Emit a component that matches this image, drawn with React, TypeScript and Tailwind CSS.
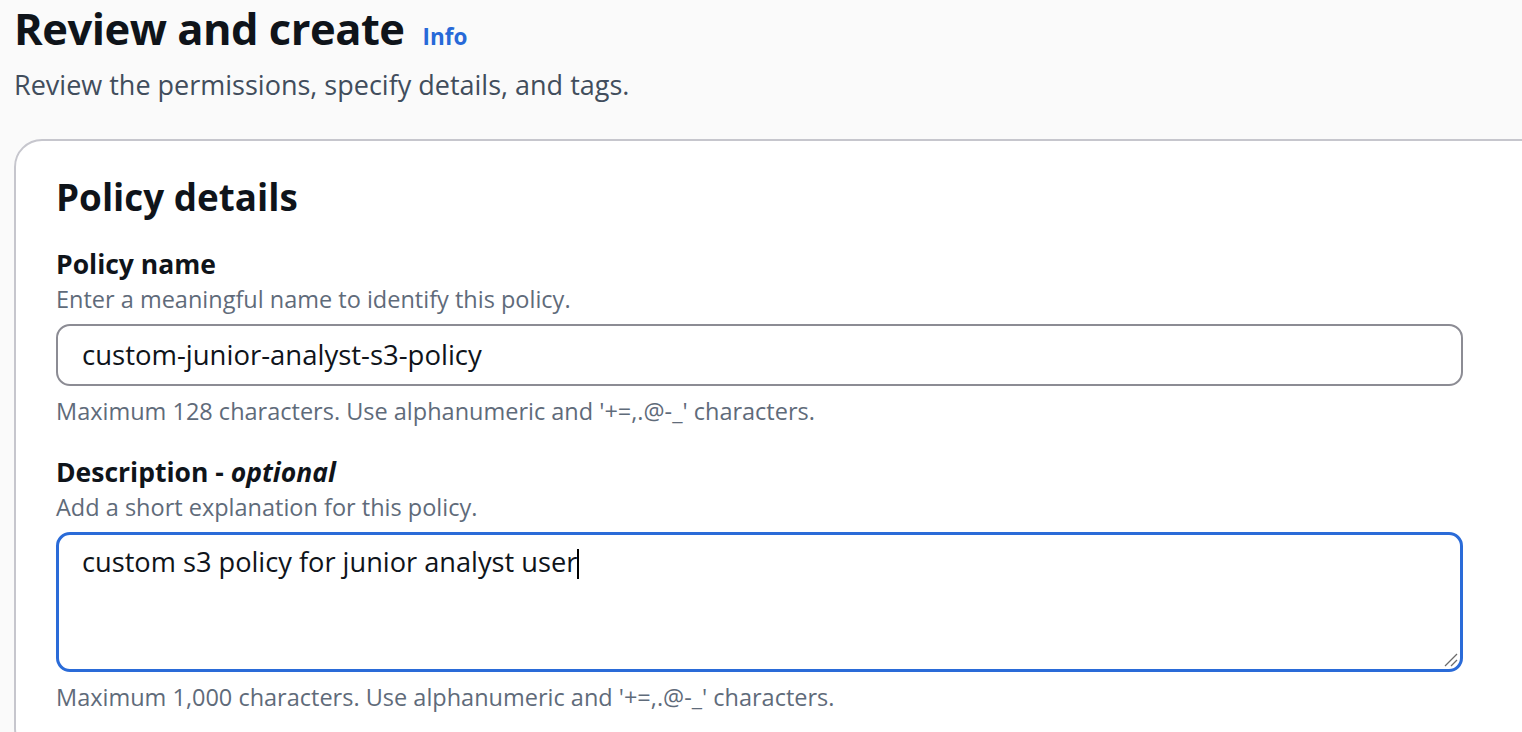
const font = { fontFamily: '"Open Sans", "Noto Sans", sans-serif' };

function Field({
  label,
  optional,
  description,
  constraint,
  children,
}: {
  label: string;
  optional?: boolean;
  description: string;
  constraint: string;
  children: React.ReactNode;
}) {
  return (
    <div className="flex flex-col">
      <div className="text-[26.5px] leading-[36px] font-bold text-[#0f141a]">
        {label}
        {optional && (
          <>
            {' - '}
            <i>optional</i>
          </>
        )}
      </div>
      <div className="text-[23.5px] leading-[34px] text-[#5f6b7a]">{description}</div>
      <div className="mt-[8px]">{children}</div>
      <div className="mt-[8px] text-[23.5px] leading-[34px] text-[#5f6b7a]">{constraint}</div>
    </div>
  );
}

export default function App() {
  return (
    <div className="w-[1522px] h-[732px] overflow-hidden bg-[#fafafa]" style={font}>
      <div className="pl-[14px] pt-[1px]">
        <div className="flex items-baseline gap-[18px]">
          <h1 className="text-[43.5px] leading-[56px] font-bold text-[#0f141a] tracking-[-0.5px]">
            Review and create
          </h1>
          <a className="text-[22.5px] font-bold text-[#2769d8]">Info</a>
        </div>
        <p className="text-[27px] leading-[36px] text-[#414d5c] mt-[10px]">
          Review the permissions, specify details, and tags.
        </p>
      </div>

      <div className="mt-[36px] ml-[14px] w-[1560px] bg-white border-2 border-[#c6c6cd] rounded-[28px] pl-[40px] pr-[40px] pt-[31px] pb-[40px]">
        <h2 className="text-[36.8px] leading-[50px] font-bold text-[#0f141a]">Policy details</h2>
        <div className="mt-[24px] flex flex-col gap-[26px] w-[1407px]">
          <Field
            label="Policy name"
            description="Enter a meaningful name to identify this policy."
            constraint="Maximum 128 characters. Use alphanumeric and '+=,.@-_' characters."
          >
            <div className="h-[62px] border-2 border-[#8c8c94] rounded-[14px] flex items-center px-[24px] text-[27.5px] text-[#0f141a]">
              custom-junior-analyst-s3-policy
            </div>
          </Field>
          <Field
            label="Description"
            optional
            description="Add a short explanation for this policy."
            constraint="Maximum 1,000 characters. Use alphanumeric and '+=,.@-_' characters."
          >
            <div className="relative h-[140px] border-[3px] border-[#2a6bd8] rounded-[14px] px-[23px] pt-[10px] text-[27.2px] leading-[34px] text-[#0f141a]">
              <span>custom s3 policy for junior analyst user</span>
              <span className="inline-block w-[1.5px] h-[30px] bg-black align-[-7px]" />
              <svg className="absolute right-[2px] bottom-[2px]" width="14" height="14" viewBox="0 0 14 14">
                <line x1="1" y1="13" x2="13" y2="1" stroke="#6b6b6b" strokeWidth="1.3" />
                <line x1="7" y1="13" x2="13" y2="7" stroke="#6b6b6b" strokeWidth="1.3" />
              </svg>
            </div>
          </Field>
        </div>
      </div>
    </div>
  );
}
